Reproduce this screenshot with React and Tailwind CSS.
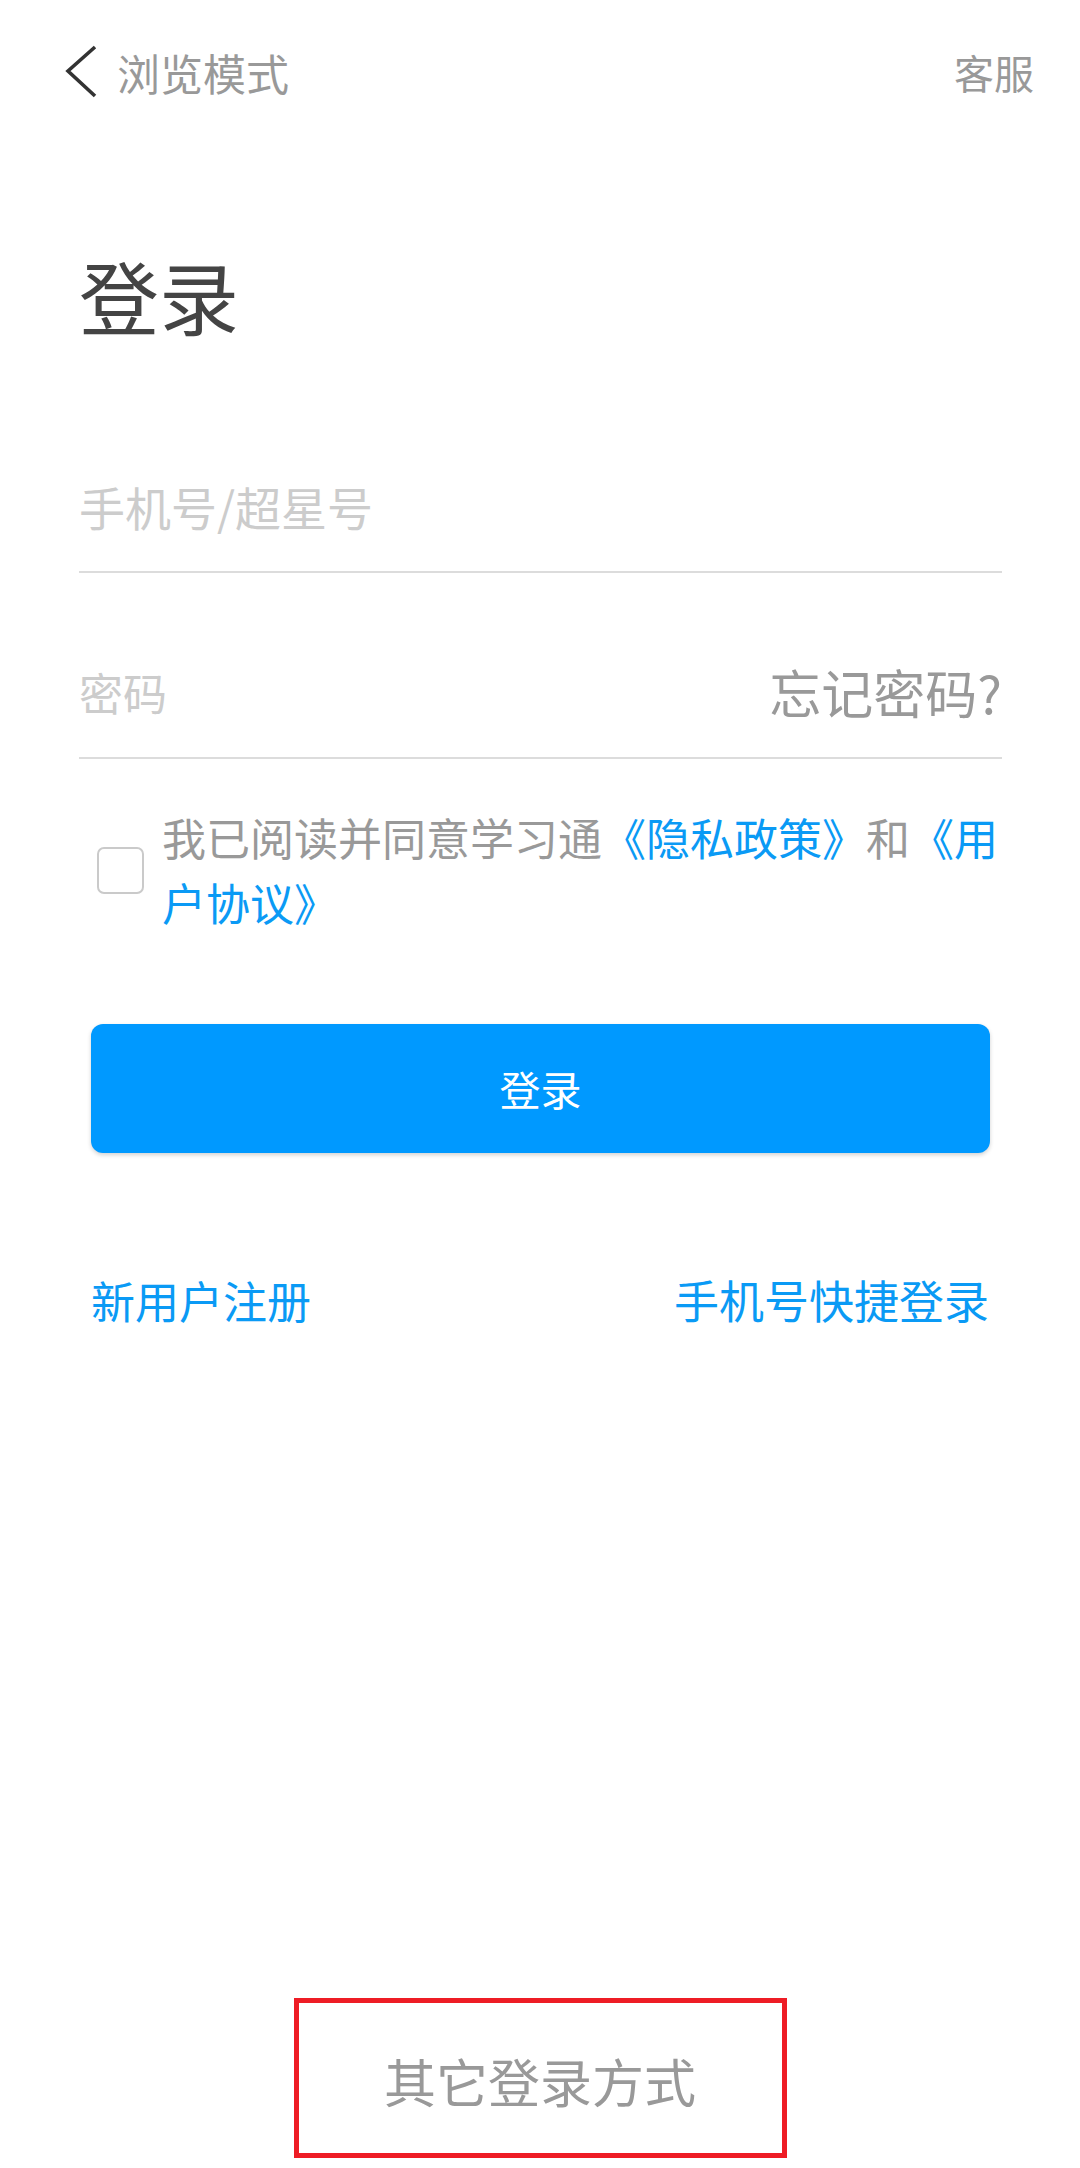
import React, { useState } from 'react';

const App = () => {
  const [agreed, setAgreed] = useState(false);

  return (
    <div className="h-[2168px] w-[1080px] flex flex-col bg-white font-['Noto_Sans_CJK_SC',sans-serif] overflow-hidden">
      {/* Header */}
      <div className="h-[144px] flex items-center justify-between pl-[64px] pr-[46px]">
        <div className="flex items-center">
          <svg width="34" height="54" viewBox="0 0 34 54" className="mr-[19px]">
            <polyline points="31,2 4,26 31,51" fill="none" stroke="#333333" strokeWidth="3.6" />
          </svg>
          <span className="text-[43px] leading-none text-[#999999]">浏览模式</span>
        </div>
        <span className="text-[40px] leading-none text-[#999999]">客服</span>
      </div>

      {/* Title */}
      <h1 className="mt-[110px] pl-[79px] text-[80px] leading-[80px] font-normal text-[#444444]">登录</h1>

      <div className="pl-[79px] pr-[78px]">
        {/* Phone */}
        <div className="mt-[106px] h-[133px] flex items-center border-b-2 border-[#dcdcdc]">
          <span className="text-[46px] leading-none text-[#cccccc]">手机号/超星号</span>
        </div>

        {/* Password */}
        <div className="mt-[53px] h-[133px] flex items-center justify-between border-b-2 border-[#dcdcdc]">
          <span className="text-[44px] leading-none text-[#cccccc]">密码</span>
          <span className="text-[52px] leading-none text-[#999999]">忘记密码?</span>
        </div>

        {/* Agreement */}
        <div className="mt-[46px] flex items-center">
          <button
            type="button"
            onClick={() => setAgreed(!agreed)}
            className={`ml-[18px] w-[47px] h-[47px] shrink-0 rounded-[7px] border-2 ${
              agreed ? 'border-[#0099ff] bg-[#0099ff]' : 'border-[#cacaca] bg-white'
            }`}
          />
          <p className="ml-[18px] w-[842px] shrink-0 text-[44px] leading-[65px] text-[#999999]">
            我已阅读并同意学习通<span className="text-[#0a9af5]">《隐私政策》</span>和<span className="text-[#0a9af5]">《用户协议》</span>
          </p>
        </div>

        {/* Login button */}
        <button
          type="button"
          className="mt-[89px] ml-[12px] w-[899px] h-[129px] rounded-[12px] bg-[#0099ff] text-white text-[41px] leading-none shadow-[0_2px_4px_rgba(0,0,0,0.18)] flex items-center justify-center"
        >
          登录
        </button>

        {/* Links */}
        <div className="mt-[125px] pl-[12px] pr-[13px] flex items-center justify-between">
          <span className="text-[44px] leading-[44px] text-[#0a9af5]">新用户注册</span>
          <span className="text-[45px] leading-[44px] text-[#0a9af5]">手机号快捷登录</span>
        </div>
      </div>

      {/* Other login */}
      <div className="mt-auto mb-[10px] mx-auto w-[493px] h-[160px] border-[5px] border-[#ee1c25] flex items-center justify-center pt-[6px]">
        <span className="text-[52px] leading-none text-[#999999]">其它登录方式</span>
      </div>
    </div>
  );
};

export default App;
